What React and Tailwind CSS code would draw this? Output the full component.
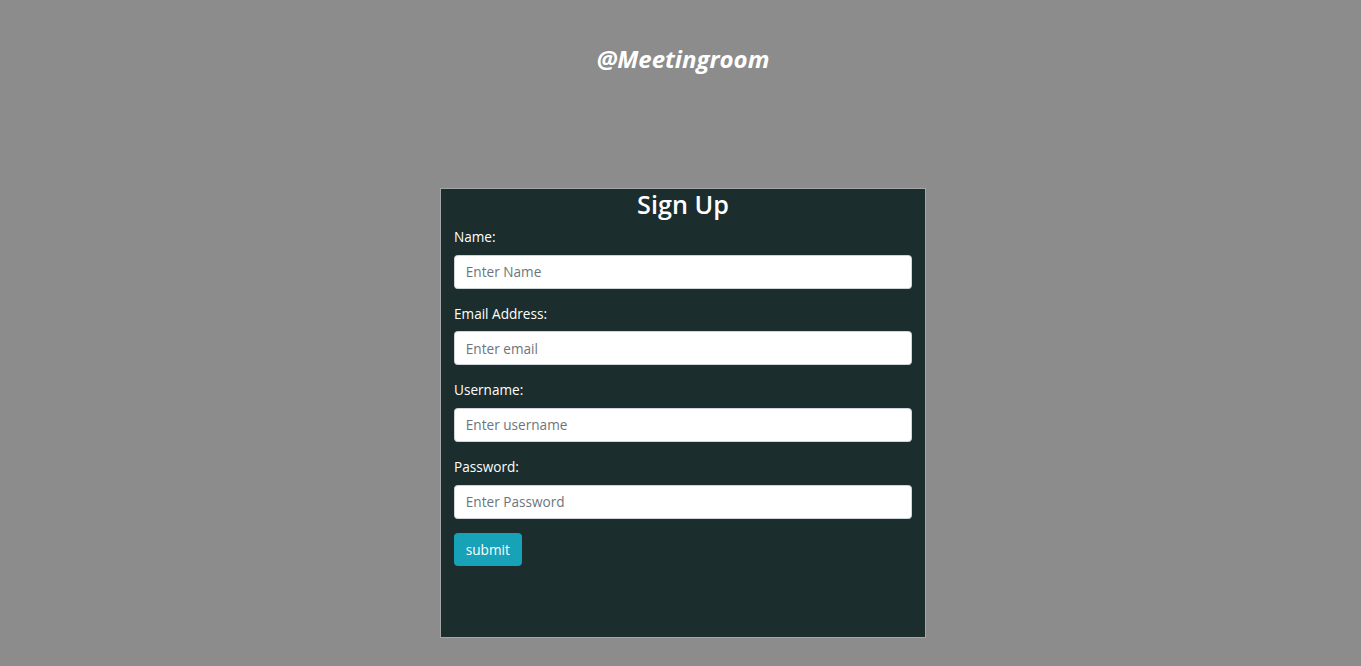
import React from "react";

const fields = [
  { id: "name", label: "Name:", type: "text", placeholder: "Enter Name" },
  { id: "email", label: "Email Address:", type: "email", placeholder: "Enter email" },
  { id: "username", label: "Username:", type: "text", placeholder: "Enter username" },
  { id: "password", label: "Password:", type: "password", placeholder: "Enter Password" },
];

const SignUp = () => {
  return (
    <div className="w-[486px] h-[450px] mx-auto bg-[#1b2e2d] border border-[#a6a6a6] px-[13px]">
      <h3 className="text-center text-white text-[25.2px] font-semibold leading-[30px] mb-[7px]">Sign Up</h3>
      <form onSubmit={e => e.preventDefault()}>
        {fields.map(f => (
          <div key={f.id} className="mb-[14px]">
            <label htmlFor={f.id} className="block text-white text-[13.6px] leading-[21.5px] mb-[7px]">
              {f.label}
            </label>
            <input
              id={f.id}
              type={f.type}
              placeholder={f.placeholder}
              className="block w-full h-[34.2px] bg-white border border-[#ced4da] rounded-[3.6px] px-[10.8px] text-[13.6px] text-[#495057] placeholder:text-[#6c757d] outline-none"
            />
          </div>
        ))}
        <button type="submit" className="h-[33px] bg-[#17a2b8] text-white text-[13.6px] leading-[21px] px-[10.8px] rounded-[3.6px] border border-[#17a2b8]">
          submit
        </button>
      </form>
    </div>
  );
};

export default function App() {
  return (
    <div className="min-h-[666px] bg-[#8c8c8c] pt-[40px] pl-[5px] font-['Open_Sans',sans-serif]">
      <h2 className="text-center text-white italic font-bold text-[24px] leading-[38px] mb-[110px]">@Meetingroom</h2>
      <SignUp />
    </div>
  );
}
